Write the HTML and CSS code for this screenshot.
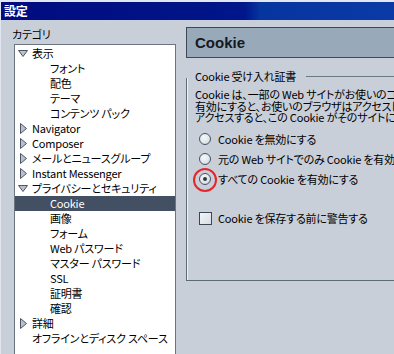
FILE: index.html
```html
<!DOCTYPE html>
<html lang="ja">
<head>
    <meta charset="UTF-8">
    <title>設定</title>
    <link rel="stylesheet" href="styles.css">
</head>
<body>
    <div class="window">
        <div class="titlebar">設定</div>

        <div class="main">
            <div class="left">
                <div class="cat-label">カテゴリ</div>
                <div class="tree">
                    <div class="row"><span class="twisty"><svg width="10" height="7" viewBox="0 0 10 7"><path d="M0.5 0.5 H9.5 L5 6.5 Z" fill="#b9c1cc" stroke="#4b5563"/></svg></span>表示</div>
                    <div class="row child">フォント</div>
                    <div class="row child">配色</div>
                    <div class="row child">テーマ</div>
                    <div class="row child">コンテンツ パック</div>
                    <div class="row"><span class="twisty"><svg width="7" height="11" viewBox="0 0 7 11"><path d="M0.5 0.5 L6.5 5.5 L0.5 10.5 Z" fill="#b9c1cc" stroke="#4b5563"/></svg></span>Navigator</div>
                    <div class="row"><span class="twisty"><svg width="7" height="11" viewBox="0 0 7 11"><path d="M0.5 0.5 L6.5 5.5 L0.5 10.5 Z" fill="#b9c1cc" stroke="#4b5563"/></svg></span>Composer</div>
                    <div class="row"><span class="twisty"><svg width="7" height="11" viewBox="0 0 7 11"><path d="M0.5 0.5 L6.5 5.5 L0.5 10.5 Z" fill="#b9c1cc" stroke="#4b5563"/></svg></span>メールとニュースグループ</div>
                    <div class="row"><span class="twisty"><svg width="7" height="11" viewBox="0 0 7 11"><path d="M0.5 0.5 L6.5 5.5 L0.5 10.5 Z" fill="#b9c1cc" stroke="#4b5563"/></svg></span>Instant Messenger</div>
                    <div class="row"><span class="twisty"><svg width="10" height="7" viewBox="0 0 10 7"><path d="M0.5 0.5 H9.5 L5 6.5 Z" fill="#b9c1cc" stroke="#4b5563"/></svg></span>プライバシーとセキュリティ</div>
                    <div class="row child selected">Cookie</div>
                    <div class="row child">画像</div>
                    <div class="row child">フォーム</div>
                    <div class="row child">Web パスワード</div>
                    <div class="row child">マスター パスワード</div>
                    <div class="row child">SSL</div>
                    <div class="row child">証明書</div>
                    <div class="row child">確認</div>
                    <div class="row"><span class="twisty"><svg width="7" height="11" viewBox="0 0 7 11"><path d="M0.5 0.5 L6.5 5.5 L0.5 10.5 Z" fill="#b9c1cc" stroke="#4b5563"/></svg></span>詳細</div>
                    <div class="row"><span class="twisty"></span>オフラインとディスク スペース</div>
                </div>
            </div>

            <div class="right">
                <div class="page-header">Cookie</div>

                <div class="legend-row">
                    <span class="legend">Cookie 受け入れ証書</span>
                    <span class="legend-line"></span>
                </div>
                <div class="groupbox">
                    <p class="desc">Cookie は、一部の Web サイトがお使いのコンピュータに保存する小さな情報です。<br>有効にすると、お使いのブラウザはアクセスしたサイトの Cookie を保存し、<br>アクセスすると、この Cookie がそのサイトに送信されます。</p>

                    <div class="option"><span class="radio"></span>Cookie を無効にする</div>
                    <div class="option"><span class="radio"></span>元の Web サイトでのみ Cookie を有効にする</div>
                    <div class="option"><span class="radio checked"><span class="mark"></span></span>すべての Cookie を有効にする</div>

                    <div class="option check-option"><span class="checkbox"></span>Cookie を保存する前に警告する</div>
                </div>
            </div>
        </div>
    </div>
</body>
</html>
```
FILE: styles.css
```css
body {
    margin: 0;
    background-color: #c9cfd9;
    font-family: "Noto Sans CJK JP", "Noto Sans", sans-serif;
    font-feature-settings: "palt";
    font-size: 11px;
    letter-spacing: -0.2px;
    color: #000;
    overflow: hidden;
    height: 354px;
}

.window {
    border-top: 2px solid #e2e6ee;
    border-left: 1px solid #e2e6ee;
    height: 352px;
    overflow: hidden;
}

.titlebar {
    height: 18px;
    line-height: 18px;
    padding-left: 3px;
    color: #fff;
    font-size: 12px;
    font-weight: bold;
    background: linear-gradient(to right, #000c80 0%, #00168a 62%, #0735a0 66%, #0a3aa6 100%);
}

.main {
    display: flex;
}

/* arbol de categorias */
.left {
    width: 162px;
    padding-left: 13px;
    flex-shrink: 0;
}

.cat-label {
    margin-left: -2px;
    padding-top: 7px;
    height: 15px;
    line-height: 15px;
    margin-bottom: 2px;
}

.tree {
    background-color: #fff;
    border: 1px solid #6b7581;
    padding-top: 1px;
    height: 330px;
    overflow: hidden;
}

.row {
    display: flex;
    align-items: center;
    height: 15px;
    line-height: 15px;
    padding-left: 1px;
    white-space: nowrap;
}

.twisty {
    width: 14px;
    height: 15px;
    margin-right: 2px;
    display: flex;
    align-items: center;
    justify-content: center;
}

.twisty svg {
    display: block;
}

.child {
    padding-left: 35px;
}

.selected {
    background-color: #434f63;
    color: #fff;
}

/* panel derecho */
.right {
    margin-left: 10px;
    flex: 1;
    min-width: 0;
    overflow: hidden;
}

.page-header {
    margin-top: 7px;
    height: 31px;
    width: 230px;
    box-sizing: border-box;
    border: 1px solid #3f4955;
    background-color: #98aab9;
    color: #15191f;
    font-family: "Liberation Sans", Arial, sans-serif;
    font-weight: bold;
    font-size: 15px;
    letter-spacing: 0;
    line-height: 30px;
    padding-left: 8px;
}

.legend-row {
    display: flex;
    align-items: center;
    margin-top: 11px;
    height: 14px;
    line-height: 14px;
}

.legend {
    padding-left: 9px;
    white-space: nowrap;
}

.legend-line {
    flex: 1;
    height: 1px;
    margin-left: 10px;
    background-color: #6b7884;
}

.groupbox {
    margin-top: -5px;
    height: 203px;
    box-sizing: border-box;
    border-left: 1px solid #5d6a77;
    border-bottom: 1px solid #5d6a77;
    box-shadow: inset 1px 0 #eef1f5;
    padding-top: 11px;
    padding-left: 8px;
}

.desc {
    margin: 0 0 5.5px 0;
    line-height: 11.5px;
    white-space: nowrap;
}

.option {
    display: flex;
    align-items: center;
    height: 20px;
    padding-left: 4px;
    white-space: nowrap;
}

.radio {
    position: relative;
    width: 12px;
    height: 12px;
    box-sizing: border-box;
    border-radius: 50%;
    border: 1px solid #4a5461;
    background: radial-gradient(circle at 40% 35%, #f6f8fb 0%, #e2e7ed 55%, #b9c2cd 100%);
    margin-right: 7px;
    flex-shrink: 0;
}

.radio.checked .mark {
    position: absolute;
    left: 3px;
    top: 3px;
    width: 4px;
    height: 4px;
    border-radius: 50%;
    background-color: #2f3946;
}

/* marca roja encima del boton */
.radio.checked::after {
    content: "";
    position: absolute;
    left: -7px;
    top: -6px;
    width: 20px;
    height: 20px;
    border: 2.5px solid #e4262b;
    border-radius: 50%;
}

.check-option {
    margin-top: 19px;
}

.checkbox {
    width: 13px;
    height: 13px;
    box-sizing: border-box;
    border: 1px solid #3d4752;
    background: linear-gradient(135deg, #f3f6f9, #d7dde5);
    margin-right: 6px;
    flex-shrink: 0;
}
```
